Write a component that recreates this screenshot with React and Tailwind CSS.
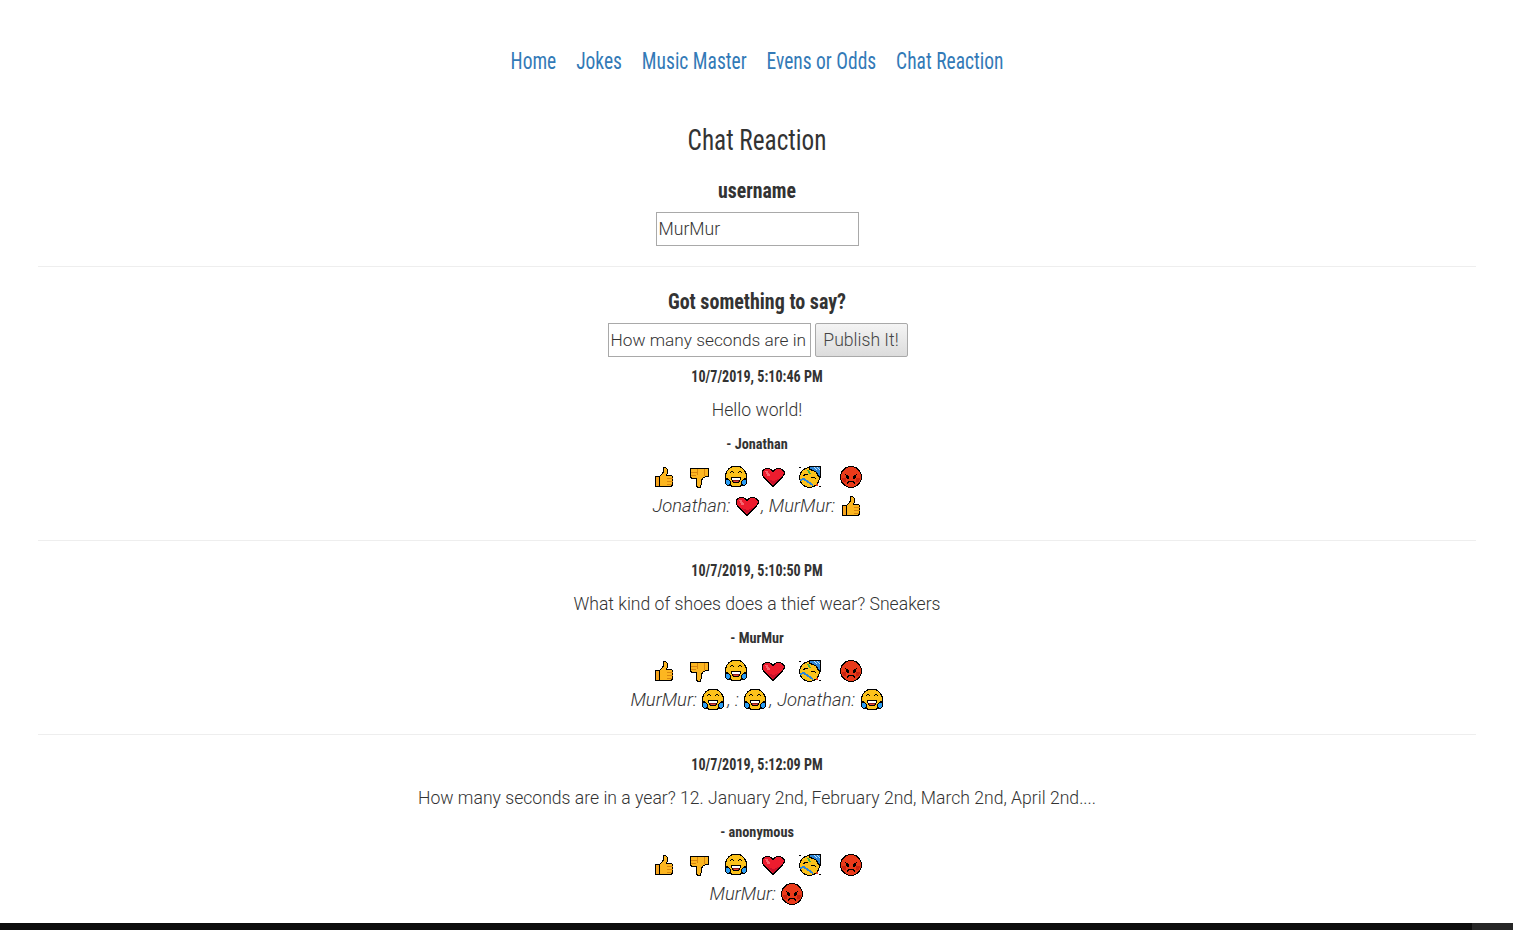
import React from "react";

const narrow = "font-['Liberation_Sans_Narrow','Roboto_Condensed','Liberation_Sans',sans-serif]";

const ThumbUp = () => (
  <svg width="22" height="22" viewBox="0 0 22 22" shapeRendering="crispEdges">
    <path d="M2.500 10.500h4v10h-4z" fill="#f7a41d" stroke="#000" />
    <path d="M6.500 10.500l3-3 1-2v-4h2l2 2v3l-1 3h5l1 1v8l-1 2h-11l-1-1z" fill="#fcb621" stroke="#000" />
    <path d="M14 12.500h6M14 15.500h6M14 18.500h5" stroke="#d9860f" />
  </svg>
);

const ThumbDown = () => (
  <svg width="22" height="22" viewBox="0 0 22 22" shapeRendering="crispEdges">
    <path d="M2.500 2.500h18v8h-3l-3 2-1 2v3l-1 3v1h-3l-1-2v-7h-5l-1-2z" fill="#fcb621" stroke="#000" />
    <path d="M3 6.500h6M3 9.500h5M9.500 3v6M16.500 3v7" stroke="#d9860f" />
  </svg>
);

const Joy = () => (
  <svg width="24" height="24" viewBox="0 0 24 24" shapeRendering="crispEdges">
    <circle cx="12" cy="11.500" r="10.500" fill="#fcc21b" stroke="#000" />
    <path d="M5.500 8.500l2-2h1l2 2M13.500 8.500l2-2h1l2 2" fill="none" stroke="#000" />
    <path d="M7.500 12.500h9v2l-2 3h-5l-2-3z" fill="#8f1d1d" stroke="#000" />
    <path d="M8 13h8v2H8z" fill="#fff" />
    <path d="M10 16h4v1h-4z" fill="#e8483f" />
    <path d="M2.500 13.500l2 1 2 2v2l-1 2h-2l-2-2v-3zM21.500 13.500l-2 1-2 2v2l1 2h2l2-2v-3z" fill="#2a9df4" stroke="#000" />
  </svg>
);

const Heart = () => (
  <svg width="24" height="24" viewBox="0 0 24 24" shapeRendering="crispEdges">
    <path d="M12 21.500l-9-9-2-3v-3l2-2 2-1h3l2 1 2 2 2-2 2-1h3l2 1 2 2v3l-2 3z" fill="#ed1c2e" stroke="#000" />
    <path d="M4 6.500l2-1 2 3 1 2-2 1-2-3z" fill="#f6646e" />
    <path d="M12 20l-7-7 4 2 4 1 7-3z" fill="#c8102a" />
  </svg>
);

const Party = () => (
  <svg width="24" height="24" viewBox="0 0 24 24" shapeRendering="crispEdges">
    <circle cx="11.500" cy="12.500" r="10" fill="#fcc21b" stroke="#000" />
    <path d="M11.500 1.500h11v11l-2-1-2-4-3-2-4-1z" fill="#2f86d6" stroke="#000" />
    <path d="M16 2l3 3M19 2l3 3" stroke="#bfe3fb" />
    <path d="M10 5l2 4" fill="none" stroke="#3fb54a" strokeWidth="1.500" />
    <path d="M5 11l3-2 2 1M13 13l3-1 2 2" fill="none" stroke="#000" />
    <path d="M2 15l4-1 4 3 5 3" fill="none" stroke="#2f86d6" strokeWidth="2" />
    <path d="M1 2.500h2M21 21.500h2" stroke="#000" />
    <path d="M18 20h2" stroke="#e8391c" strokeWidth="2" />
  </svg>
);

const Angry = () => (
  <svg width="24" height="24" viewBox="0 0 24 24" shapeRendering="crispEdges">
    <circle cx="12" cy="12" r="10.500" fill="#ea3a1a" stroke="#000" />
    <path d="M3 13h4v4H4zM17 13h4l-1 4h-3z" fill="#c9230f" />
    <path d="M6 9l4 2v3H8zM18 9l-4 2v3h2z" fill="#000" />
    <path d="M8 18.500l2-2h4l2 2" fill="none" stroke="#000" />
  </svg>
);

const icons = { up: ThumbUp, down: ThumbDown, joy: Joy, heart: Heart, party: Party, angry: Angry };

const ReactionBar = () => (
  <div className="flex justify-center items-center h-[24px]">
    <span className="w-[33px] flex justify-center"><ThumbUp /></span>
    <span className="w-[37px] flex justify-center"><ThumbDown /></span>
    <span className="w-[37px] flex justify-center"><Joy /></span>
    <span className="w-[37px] flex justify-center"><Heart /></span>
    <span className="w-[37px] flex justify-center"><Party /></span>
    <span className="w-[33px] ml-[6px] flex justify-center"><Angry /></span>
  </div>
);

const messages = [
  {
    time: "10/7/2019, 5:10:46 PM",
    text: "Hello world!",
    user: "- Jonathan",
    reactions: [["Jonathan", "heart"], ["MurMur", "up"]],
  },
  {
    time: "10/7/2019, 5:10:50 PM",
    text: "What kind of shoes does a thief wear? Sneakers",
    user: "- MurMur",
    reactions: [["MurMur", "joy"], ["", "joy"], ["Jonathan", "joy"]],
  },
  {
    time: "10/7/2019, 5:12:09 PM",
    text: "How many seconds are in a year? 12. January 2nd, February 2nd, March 2nd, April 2nd....",
    user: "- anonymous",
    reactions: [["MurMur", "angry"]],
  },
];

const Message = ({ msg, last }) => (
  <div className={last ? "" : "border-b border-[#eeeeee] mb-[19px] pb-[22px]"}>
    <h4 className={`${narrow} font-bold text-[17px] leading-[20px] text-[#333] h-[20px] scale-x-[0.83]`}>{msg.time}</h4>
    <p className="text-[17.6px] leading-[25px] mt-[12px] text-[#333]">{msg.text}</p>
    <h5 className={`${narrow} font-bold text-[15px] leading-[20px] text-[#333] mt-[11px] scale-x-[0.95]`}>{msg.user}</h5>
    <div className="mt-[11px]"><ReactionBar /></div>
    <div className="flex justify-center items-center italic text-[18.4px] leading-[24px] mt-[5px] h-[24px]">
      {msg.reactions.map(([name, icon], i) => {
        const Icon = icons[icon];
        return (
          <span key={i} className="flex items-center whitespace-pre">
            {name}:&nbsp;<Icon />{i < msg.reactions.length - 1 ? <span className="ml-[2px]">,&nbsp;</span> : null}
          </span>
        );
      })}
    </div>
  </div>
);

export default function App() {
  return (
    <div className="h-[930px] overflow-hidden bg-white flex flex-col font-['Roboto',sans-serif] font-light text-[#333] text-center">
      <div className="flex-1 pl-[38px] pr-[37px]">
        <nav className={`${narrow} flex justify-center gap-[24.5px] pt-[46px] text-[24px] leading-[30px] font-normal text-[#337ab7] scale-x-[0.812]`}>
          <a href="#">Home</a>
          <a href="#">Jokes</a>
          <a href="#">Music Master</a>
          <a href="#">Evens or Odds</a>
          <a href="#">Chat Reaction</a>
        </nav>
        <h2 className={`${narrow} text-[30px] leading-[36px] font-normal mt-[46px] text-[#333] scale-x-[0.84]`}>Chat Reaction</h2>
        <h4 className={`${narrow} font-bold text-[22px] leading-[26px] mt-[20px] scale-x-[0.9]`}>username</h4>
        <input
          readOnly
          value="MurMur"
          className="block mx-auto mt-[8px] w-[203px] h-[34px] border border-[#a9a9a9] px-[2px] text-[17.6px] text-[#333] font-light"
        />
        <hr className="border-t border-[#eeeeee] mt-[20px]" />
        <h4 className={`${narrow} font-bold text-[22px] leading-[26px] mt-[22px] scale-x-[0.91]`}>Got something to say?</h4>
        <div className="flex justify-center gap-[4px] mt-[8px] ml-[1px]">
          <input
            readOnly
            value="How many seconds are in"
            className="w-[203px] h-[34px] border border-[#a9a9a9] px-[2px] text-[17.3px] text-[#333] font-light"
          />
          <button className="w-[93px] h-[34px] border border-[#a9a9a9] rounded-[2px] bg-gradient-to-b from-[#f4f4f4] to-[#dcdcdc] text-[17.6px] text-[#444] font-light">
            Publish It!
          </button>
        </div>
        <div className="mt-[9px]">
          {messages.map((m, i) => (
            <Message key={i} msg={m} last={i === messages.length - 1} />
          ))}
        </div>
      </div>
      <div className="h-[7px] shrink-0 flex">
        <div className="flex-1 bg-[#0c0c0c]" />
        <div className="w-[41px] bg-[#262626]" />
      </div>
    </div>
  );
}
